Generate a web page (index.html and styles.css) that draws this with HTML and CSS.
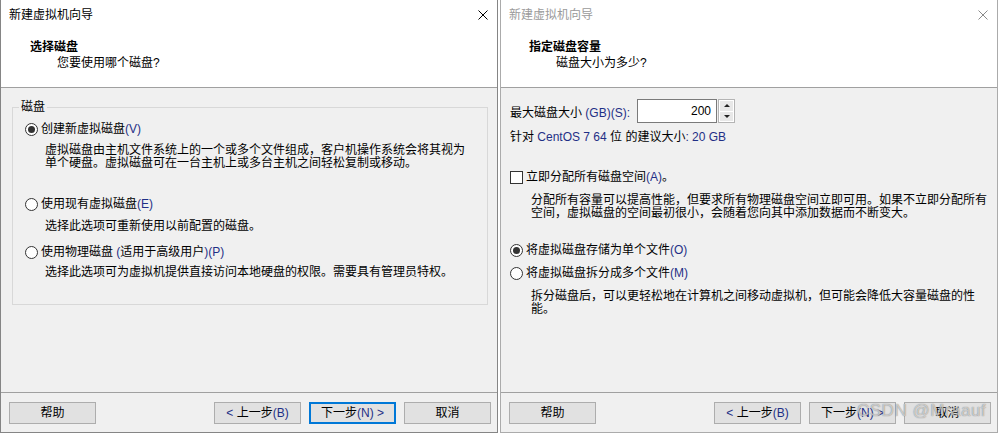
FILE: index.html
```html
<!DOCTYPE html>
<html lang="zh-CN">
<head>
<meta charset="utf-8">
<title>新建虚拟机向导</title>
<link rel="stylesheet" href="styles.css">
</head>
<body>
<div class="screen">
  <section class="dialog active">
    <header class="head">
      <div class="titlebar">
        <span class="title">新建虚拟机向导</span>
        <svg class="close" width="10" height="10" viewBox="0 0 10 10"><path d="M0.5 0.5L9.5 9.5M9.5 0.5L0.5 9.5" stroke="currentColor" stroke-width="1" fill="none"/></svg>
      </div>
      <div class="h1">选择磁盘</div>
      <div class="h2">您要使用哪个磁盘?</div>
    </header>
    <main class="content">
      <fieldset class="group">
        <legend>磁盘</legend>
        <div class="opt r1"><span class="radio on"></span>创建新虚拟磁盘<span class="en">(V)</span></div>
        <p class="desc d1">虚拟磁盘由主机文件系统上的一个或多个文件组成，客户机操作系统会将其视为<br>单个硬盘。虚拟磁盘可在一台主机上或多台主机之间轻松复制或移动。</p>
        <div class="opt r2"><span class="radio"></span>使用现有虚拟磁盘<span class="en">(E)</span></div>
        <p class="desc d2">选择此选项可重新使用以前配置的磁盘。</p>
        <div class="opt r3"><span class="radio"></span>使用物理磁盘&nbsp;<span class="en">(</span>适用于高级用户<span class="en">)(P)</span></div>
        <p class="desc d3">选择此选项可为虚拟机提供直接访问本地硬盘的权限。需要具有管理员特权。</p>
      </fieldset>
    </main>
    <footer class="foot">
      <button class="btn">帮助</button>
      <span class="spacer"></span>
      <button class="btn nav"><span class="en">&lt;</span> 上一步<span class="en">(B)</span></button>
      <button class="btn nav focus">下一步<span class="en">(N) &gt;</span></button>
      <button class="btn nav">取消</button>
    </footer>
  </section>

  <section class="dialog inactive">
    <header class="head">
      <div class="titlebar">
        <span class="title">新建虚拟机向导</span>
        <svg class="close" width="10" height="10" viewBox="0 0 10 10"><path d="M0.5 0.5L9.5 9.5M9.5 0.5L0.5 9.5" stroke="currentColor" stroke-width="1" fill="none"/></svg>
      </div>
      <div class="h1">指定磁盘容量</div>
      <div class="h2">磁盘大小为多少?</div>
    </header>
    <main class="content pad">
      <div class="sizerow">
        <span class="sizelabel">最大磁盘大小 <span class="en">(GB)(S):</span></span>
        <span class="numbox">200</span>
        <span class="spinner">
          <span class="sbtn"><span class="up"></span></span>
          <span class="sbtn"><span class="down"></span></span>
        </span>
      </div>
      <p class="rec">针对 <span class="en">CentOS 7 64</span> 位 的建议大小<span class="en">: 20 GB</span></p>
      <div class="opt c1"><span class="check"></span>立即分配所有磁盘空间<span class="en">(A)</span>。</div>
      <p class="desc e1">分配所有容量可以提高性能，但要求所有物理磁盘空间立即可用。如果不立即分配所有<br>空间，虚拟磁盘的空间最初很小，会随着您向其中添加数据而不断变大。</p>
      <div class="opt o1"><span class="radio on"></span>将虚拟磁盘存储为单个文件<span class="en">(O)</span></div>
      <div class="opt o2"><span class="radio"></span>将虚拟磁盘拆分成多个文件<span class="en">(M)</span></div>
      <p class="desc e2">拆分磁盘后，可以更轻松地在计算机之间移动虚拟机，但可能会降低大容量磁盘的性<br>能。</p>
    </main>
    <footer class="foot">
      <button class="btn">帮助</button>
      <span class="spacer"></span>
      <button class="btn nav"><span class="en">&lt;</span> 上一步<span class="en">(B)</span></button>
      <button class="btn nav">下一步<span class="en">(N) &gt;</span></button>
      <button class="btn nav">取消</button>
    </footer>
  </section>
  <span class="watermark">CSDN @Mraauf</span>
</div>
</body>
</html>
```

FILE: styles.css
```css
* { box-sizing: border-box; }

html, body {
  margin: 0;
  padding: 0;
  background: #ffffff;
}

body {
  font-family: "Liberation Sans", "Noto Sans CJK SC", sans-serif;
  font-size: 12px;
  color: #000000;
}

.screen {
  position: relative;
  display: flex;
  gap: 2px;
  width: 998px;
  height: 433px;
  overflow: hidden;
}

.dialog {
  width: 498px;
  height: 433px;
  display: flex;
  flex-direction: column;
  background: #f0f0f0;
  border: 1px solid #858585;
  border-top: none;
}

.dialog.inactive {
  border-color: #ababab;
}

.en { color: #1f2f86; }

/* header */
.head {
  background: #ffffff;
  height: 88px;
  border-bottom: 1px solid #a0a0a0;
  flex: none;
}

.titlebar {
  height: 30px;
  display: flex;
  align-items: center;
  justify-content: space-between;
  padding: 0 9px 0 8px;
  line-height: 30px;
}

.close { color: #000000; display: block; }

.inactive .title { color: #9a9a9a; }
.inactive .close { color: #8a8a8a; }

.h1 {
  margin-top: 9px;
  padding-left: 29px;
  line-height: 16px;
  font-weight: bold;
}

.h2 {
  padding-left: 56px;
  line-height: 16px;
}

.inactive .h1 { padding-left: 28px; }
.inactive .h2 { padding-left: 55px; }

/* content */
.content {
  flex: 1;
  min-height: 0;
}

.content.pad {
  padding: 0 0 0 9px;
}

.group {
  margin: 11px 9px 0 11px;
  padding: 0 0 25px 12px;
  border: 1px solid #d8d8d8;
  min-width: 0;
}

.group legend {
  padding: 0 2px;
  margin-left: -6px;
  line-height: 16px;
}

.opt {
  display: flex;
  align-items: center;
  line-height: 16px;
  white-space: nowrap;
}

.desc {
  margin: 0;
  line-height: 13px;
  white-space: nowrap;
}

.group .desc { padding-left: 20px; }

.r1 { margin-top: 6px; }
.d1 { margin-top: 7px; }
.r2 { margin-top: 26px; }
.d2 { margin-top: 8px; }
.r3 { margin-top: 11px; }
.d3 { margin-top: 6px; }

.radio {
  position: relative;
  width: 13px;
  height: 13px;
  border: 1px solid #333333;
  border-radius: 50%;
  background: #ffffff;
  margin-right: 3px;
  flex: none;
}

.radio.on::after {
  content: "";
  position: absolute;
  left: 2px;
  top: 2px;
  width: 7px;
  height: 7px;
  border-radius: 50%;
  background: #333333;
}

.check {
  width: 13px;
  height: 13px;
  border: 1px solid #333333;
  background: #ffffff;
  margin-right: 3px;
  flex: none;
}

/* size row */
.sizerow {
  display: flex;
  align-items: center;
  margin-top: 11px;
  height: 24px;
}

.sizelabel {
  width: 127px;
  white-space: nowrap;
}

.numbox {
  width: 80px;
  height: 24px;
  border: 1px solid #7a7a7a;
  background: #ffffff;
  text-align: right;
  padding-right: 5px;
  line-height: 22px;
}

.spinner {
  width: 17px;
  height: 24px;
  margin-left: 1px;
  display: flex;
  flex-direction: column;
  border: 1px solid #b4b4b4;
  background: #ffffff;
}

.sbtn {
  flex: 1;
  display: flex;
  align-items: center;
  justify-content: center;
  background: #e8e8e8;
  margin: 1px;
}

.sbtn + .sbtn { margin-top: 0; }

.up, .down {
  width: 0;
  height: 0;
  border-left: 3px solid transparent;
  border-right: 3px solid transparent;
}

.up { border-bottom: 3px solid #222222; }
.down { border-top: 3px solid #222222; }

.rec {
  margin: 6px 0 0;
  line-height: 16px;
  white-space: nowrap;
}

.c1 { margin-top: 24px; }
.e1 { margin-top: 9px; padding-left: 21px; }
.o1 { margin-top: 22px; }
.o2 { margin-top: 7px; }
.e2 { margin-top: 9px; padding-left: 21px; }

/* footer */
.foot {
  flex: none;
  height: 40px;
  border-top: 1px solid #a0a0a0;
  display: flex;
  align-items: flex-start;
  padding: 9px 6px 0 8px;
}

.spacer { flex: 1; }

.btn {
  width: 87px;
  height: 22px;
  border: 1px solid #adadad;
  background: #e1e1e1;
  font-family: inherit;
  font-size: 12px;
  color: #000000;
  padding: 0;
  line-height: 20px;
  text-align: center;
  white-space: nowrap;
}

.btn.nav { margin-left: 8px; }
.btn.nav:first-of-type { margin-left: 0; }

.btn.focus {
  border: 2px solid #0078d7;
  line-height: 18px;
}

.watermark {
  position: absolute;
  left: 857px;
  top: 401px;
  font-family: "Liberation Sans", sans-serif;
  font-size: 17px;
  letter-spacing: 0.5px;
  color: rgba(255, 255, 255, 0.6);
  text-shadow: 0 0 1px rgba(70, 70, 70, 0.8);
  pointer-events: none;
}
```
